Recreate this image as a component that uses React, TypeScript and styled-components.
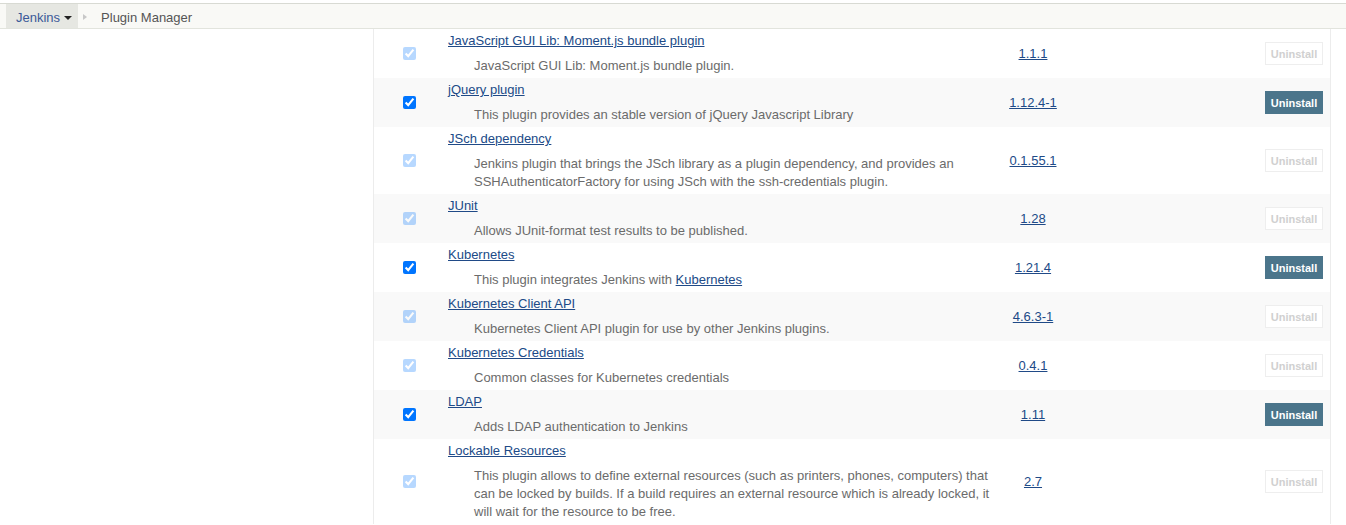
import styled, { createGlobalStyle } from 'styled-components';

const GlobalStyle = createGlobalStyle`
	body {
		margin: 0;
		background: #fff;
		font-family: 'Liberation Sans', Arial, Helvetica, sans-serif;
		font-size: 13px;
		color: #333;
	}
`;

const Breadcrumbs = styled.div`
	margin-top: 3px;
	height: 24px;
	display: flex;
	align-items: stretch;
	background: #f9f9f6;
	border-top: 1px solid #d8dad3;
	border-bottom: 1px solid #e2e4dd;
	padding-left: 6px;
`;

const Crumb = styled.div<{ $active?: boolean }>`
	display: flex;
	align-items: center;
	gap: 4px;
	padding: 2px 6px 0 10px;
	background: ${(p) => (p.$active ? '#e6e7e2' : 'transparent')};
	color: ${(p) => (p.$active ? '#3b5998' : '#555')};
`;

const DropArrow = styled.span`
	width: 0;
	height: 0;
	border-left: 4px solid transparent;
	border-right: 4px solid transparent;
	border-top: 4px solid #222;
	margin-top: 1px;
`;

const SepArrow = styled.span`
	align-self: center;
	width: 0;
	height: 0;
	border-top: 3px solid transparent;
	border-bottom: 3px solid transparent;
	border-left: 4px solid #c8c8c8;
	margin: 2px 4px 0 5px;
`;

const Page = styled.div`
	display: flex;
`;

const SidePanel = styled.div`
	width: 373px;
	flex-shrink: 0;
`;

const MainPanel = styled.div`
	width: 958px;
	border-left: 1px solid #ececec;
	border-right: 1px solid #ececec;
	box-sizing: border-box;
`;

const Row = styled.div<{ $odd?: boolean }>`
	display: grid;
	grid-template-columns: 71px 558px 60px 1fr;
	align-items: center;
	background: ${(p) => (p.$odd ? '#f9f9f9' : '#fff')};
`;

const CheckCell = styled.div`
	display: flex;
	justify-content: center;
`;

const Check = styled.input<{ $dim?: boolean }>`
	margin: 0;
	width: 13px;
	height: 13px;
	opacity: ${(p) => (p.$dim ? 0.28 : 1)};
`;

const NameCell = styled.div`
	padding: 4px 3px 3px;
`;

const Name = styled.a`
	display: block;
	line-height: 16px;
	color: #204a87;
	text-decoration: underline;
`;

const Desc = styled.div`
	margin-top: 8px;
	padding-left: 26px;
	line-height: 18px;
	color: #6b6b6b;
`;

const Version = styled.a`
	justify-self: center;
	color: #204a87;
	text-decoration: underline;
`;

const ButtonCell = styled.div`
	display: flex;
	justify-content: flex-end;
	padding-right: 7px;
`;

const UninstallButton = styled.button<{ $enabled?: boolean }>`
	width: 58px;
	height: 23px;
	padding: 0;
	font-family: 'Liberation Sans', Arial, sans-serif;
	font-size: 11px;
	font-weight: bold;
	border: 1px solid ${(p) => (p.$enabled ? '#4b758b' : '#eeeeee')};
	background: ${(p) => (p.$enabled ? '#4b758b' : '#fff')};
	color: ${(p) => (p.$enabled ? '#fff' : '#d0d0d0')};
`;

const InlineLink = styled.a`
	color: #204a87;
	text-decoration: underline;
`;

interface Plugin {
	name: string;
	desc: React.ReactNode;
	version: string;
	enabled: boolean;
}

const plugins: Plugin[] = [
	{
		name: 'JavaScript GUI Lib: Moment.js bundle plugin',
		desc: 'JavaScript GUI Lib: Moment.js bundle plugin.',
		version: '1.1.1',
		enabled: false,
	},
	{
		name: 'jQuery plugin',
		desc: 'This plugin provides an stable version of jQuery Javascript Library',
		version: '1.12.4-1',
		enabled: true,
	},
	{
		name: 'JSch dependency',
		desc: 'Jenkins plugin that brings the JSch library as a plugin dependency, and provides an SSHAuthenticatorFactory for using JSch with the ssh-credentials plugin.',
		version: '0.1.55.1',
		enabled: false,
	},
	{
		name: 'JUnit',
		desc: 'Allows JUnit-format test results to be published.',
		version: '1.28',
		enabled: false,
	},
	{
		name: 'Kubernetes',
		desc: (
			<>
				This plugin integrates Jenkins with <InlineLink href="#">Kubernetes</InlineLink>
			</>
		),
		version: '1.21.4',
		enabled: true,
	},
	{
		name: 'Kubernetes Client API',
		desc: 'Kubernetes Client API plugin for use by other Jenkins plugins.',
		version: '4.6.3-1',
		enabled: false,
	},
	{
		name: 'Kubernetes Credentials',
		desc: 'Common classes for Kubernetes credentials',
		version: '0.4.1',
		enabled: false,
	},
	{
		name: 'LDAP',
		desc: 'Adds LDAP authentication to Jenkins',
		version: '1.11',
		enabled: true,
	},
	{
		name: 'Lockable Resources',
		desc: 'This plugin allows to define external resources (such as printers, phones, computers) that can be locked by builds. If a build requires an external resource which is already locked, it will wait for the resource to be free.',
		version: '2.7',
		enabled: false,
	},
];

export default function App() {
	return (
		<>
			<GlobalStyle />
			<Breadcrumbs>
				<Crumb $active>
					Jenkins <DropArrow />
				</Crumb>
				<SepArrow />
				<Crumb>Plugin Manager</Crumb>
			</Breadcrumbs>
			<Page>
				<SidePanel />
				<MainPanel>
					{plugins.map((p, i) => (
						<Row key={p.name} $odd={i % 2 === 1}>
							<CheckCell>
								{/* dependencies keep their box ticked but greyed out */}
								<Check type="checkbox" checked readOnly $dim={!p.enabled} />
							</CheckCell>
							<NameCell>
								<Name href="#">{p.name}</Name>
								<Desc>{p.desc}</Desc>
							</NameCell>
							<Version href="#">{p.version}</Version>
							<ButtonCell>
								<UninstallButton $enabled={p.enabled} disabled={!p.enabled}>
									Uninstall
								</UninstallButton>
							</ButtonCell>
						</Row>
					))}
				</MainPanel>
			</Page>
		</>
	);
}
